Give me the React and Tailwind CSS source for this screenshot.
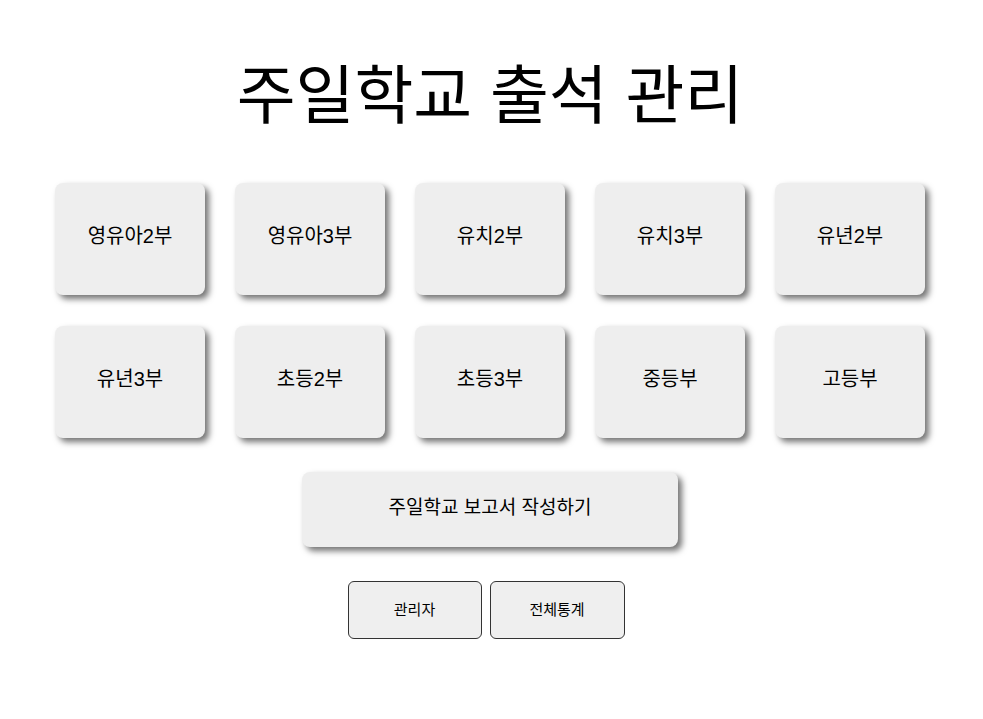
import React from "react";

const groups = [
  "영유아2부",
  "영유아3부",
  "유치2부",
  "유치3부",
  "유년2부",
  "유년3부",
  "초등2부",
  "초등3부",
  "중등부",
  "고등부",
];

export default function App() {
  return (
    <div
      className="min-h-screen bg-white flex flex-col items-center pr-[3px] text-black"
      style={{ fontFamily: '"Liberation Sans", "Noto Sans CJK KR", sans-serif' }}
    >
      <h1 className="mt-[56px] text-[64px] leading-[80px]">주일학교 출석 관리</h1>

      <div className="mt-[47px] grid grid-cols-5 gap-x-[30px] gap-y-[31px]">
        {groups.map((g) => (
          <button
            key={g}
            type="button"
            className="w-[150px] h-[112px] pb-[6px] rounded-lg bg-[#eeeeee] text-[20px] shadow-[4px_4px_6px_rgba(0,0,0,0.55)]"
          >
            {g}
          </button>
        ))}
      </div>

      <button
        type="button"
        className="mt-[34px] w-[376px] h-[75px] pb-[3px] rounded-lg bg-[#eeeeee] text-[19px] shadow-[4px_4px_6px_rgba(0,0,0,0.55)]"
      >
        주일학교 보고서 작성하기
      </button>

      <div className="mt-[34px] mr-[8px] flex gap-2">
        <button
          type="button"
          className="w-[134px] h-[58px] rounded-md border border-[#333] bg-[#efefef] text-[15px]"
        >
          관리자
        </button>
        <button
          type="button"
          className="w-[135px] h-[58px] rounded-md border border-[#333] bg-[#efefef] text-[15px]"
        >
          전체통계
        </button>
      </div>
    </div>
  );
}
